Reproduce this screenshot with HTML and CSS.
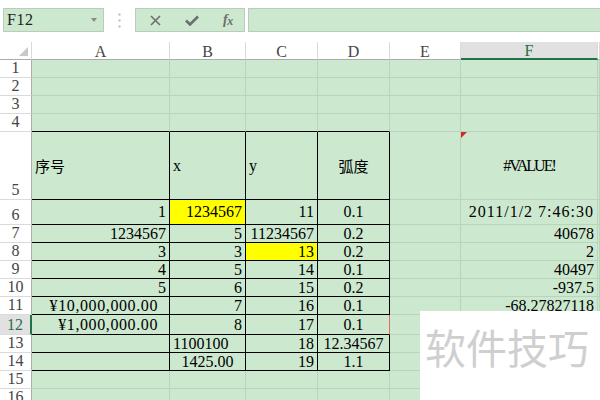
FILE: index.html
```html
<!DOCTYPE html>
<html lang="zh">
<head>
<meta charset="utf-8">
<title>Sheet</title>
<link rel="stylesheet" href="styles.css">
</head>
<body>
<div class="fbar">
  <div class="namebox"><span class="ref">F12</span><span class="dd"></span></div>
  <div class="grip"><svg width="3" height="15" viewBox="0 0 3 15"><circle cx="1.5" cy="1.5" r="1.2" fill="#c4c4c4"/><circle cx="1.5" cy="7.5" r="1.2" fill="#c4c4c4"/><circle cx="1.5" cy="13.5" r="1.2" fill="#c4c4c4"/></svg></div>
  <div class="btns">
    <svg class="ic-x" width="11" height="11" viewBox="0 0 11 11"><path d="M1 1L10 10M10 1L1 10" stroke="#6e6e6e" stroke-width="1.6" fill="none"/></svg>
    <svg class="ic-ok" width="14" height="11" viewBox="0 0 14 11"><path d="M1 5.5L5 9.5L13 1.5" stroke="#6e6e6e" stroke-width="2.6" fill="none"/></svg>
    <span class="fx"><i>f</i><i class="sx">x</i></span>
  </div>
  <div class="formula"></div>
</div>

<div class="sheet">
  <!-- header -->
  <div class="corner"><span class="tri"></span></div>
  <div class="ch">A</div><div class="ch">B</div><div class="ch">C</div><div class="ch">D</div><div class="ch">E</div><div class="ch sel">F</div><div class="ch"></div>

  <!-- 1 -->
  <div class="rh">1</div>
  <div class="c"></div><div class="c"></div><div class="c"></div><div class="c"></div><div class="c"></div><div class="c"></div><div class="c"></div>
  <!-- 2 -->
  <div class="rh">2</div>
  <div class="c"></div><div class="c"></div><div class="c"></div><div class="c"></div><div class="c"></div><div class="c"></div><div class="c"></div>
  <!-- 3 -->
  <div class="rh">3</div>
  <div class="c"></div><div class="c"></div><div class="c"></div><div class="c"></div><div class="c"></div><div class="c"></div><div class="c"></div>
  <!-- 4 -->
  <div class="rh">4</div>
  <div class="c tb"></div><div class="c tb"></div><div class="c tb"></div><div class="c tb"></div><div class="c"></div><div class="c"></div><div class="c"></div>

  <!-- 5 -->
  <div class="rh">5</div>
  <div class="c t l cjk">序号</div><div class="c t l">x</div><div class="c t l">y</div><div class="c t m cjk">弧度</div><div class="c"></div><div class="c m note"><span class="flag"></span><span class="err">#VALUE!</span></div><div class="c"></div>
  <!-- 6 -->
  <div class="rh">6</div>
  <div class="c t r">1</div><div class="c t r yel">1234567</div><div class="c t r">11</div><div class="c t m">0.1</div><div class="c"></div><div class="c r"><span class="dt">2011/1/2 7:46:30</span></div><div class="c"></div>
  <!-- 7 -->
  <div class="rh">7</div>
  <div class="c t r">1234567</div><div class="c t r">5</div><div class="c t r">11234567</div><div class="c t m">0.2</div><div class="c"></div><div class="c r">40678</div><div class="c"></div>
  <!-- 8 -->
  <div class="rh">8</div>
  <div class="c t r">3</div><div class="c t r">3</div><div class="c t r yel">13</div><div class="c t m">0.2</div><div class="c"></div><div class="c r">2</div><div class="c"></div>
  <!-- 9 -->
  <div class="rh">9</div>
  <div class="c t r">4</div><div class="c t r">5</div><div class="c t r">14</div><div class="c t m">0.1</div><div class="c"></div><div class="c r">40497</div><div class="c"></div>
  <!-- 10 -->
  <div class="rh">10</div>
  <div class="c t r">5</div><div class="c t r">6</div><div class="c t r">15</div><div class="c t m">0.2</div><div class="c"></div><div class="c r">-937.5</div><div class="c"></div>
  <!-- 11 -->
  <div class="rh">11</div>
  <div class="c t r acct">¥10,000,000.00</div><div class="c t r">7</div><div class="c t r">16</div><div class="c t m">0.1</div><div class="c"></div><div class="c r">-68.27827118</div><div class="c"></div>
  <!-- 12 -->
  <div class="rh sel">12</div>
  <div class="c t r acct">¥1,000,000.00</div><div class="c t r">8</div><div class="c t r">17</div><div class="c t m red">0.1</div><div class="c"></div><div class="c"></div><div class="c"></div>
  <!-- 13 -->
  <div class="rh">13</div>
  <div class="c t"></div><div class="c t l">1100100</div><div class="c t r">18</div><div class="c t m">12.34567</div><div class="c"></div><div class="c"></div><div class="c"></div>
  <!-- 14 -->
  <div class="rh">14</div>
  <div class="c t"></div><div class="c t m">1425.00</div><div class="c t r">19</div><div class="c t m">1.1</div><div class="c"></div><div class="c"></div><div class="c"></div>
  <!-- 15 -->
  <div class="rh">15</div>
  <div class="c"></div><div class="c"></div><div class="c"></div><div class="c"></div><div class="c"></div><div class="c"></div><div class="c"></div>
  <!-- 16 -->
  <div class="rh">16</div>
  <div class="c"></div><div class="c"></div><div class="c"></div><div class="c"></div><div class="c"></div><div class="c"></div><div class="c"></div>
</div>

<div class="watermark">软件技巧</div>
</body>
</html>
```

FILE: styles.css
```css
* { box-sizing: border-box; }

body {
  margin: 0;
  width: 600px;
  height: 400px;
  overflow: hidden;
  position: relative;
  background: #ffffff;
  font-family: "Liberation Serif", "Noto Sans CJK SC", serif;
  color: #000;
}

/* ---------- formula bar ---------- */
.fbar {
  display: flex;
  height: 42px;
  padding: 8px 0 10px 3px;
}

.namebox {
  width: 101px;
  display: flex;
  align-items: center;
  justify-content: space-between;
  padding: 0 6px 0 3px;
  background: #cce8cf;
  border: 1px solid #bccbbd;
  font-size: 16px;
  letter-spacing: 0.5px;
  color: #222;
}

.dd {
  width: 0;
  height: 0;
  border-left: 3.5px solid transparent;
  border-right: 3.5px solid transparent;
  border-top: 4px solid #8a8a8a;
}

.grip {
  width: 31px;
  display: flex;
  align-items: center;
  justify-content: center;
}

.btns {
  width: 110px;
  display: flex;
  align-items: center;
  gap: 24px;
  padding-left: 14px;
  background: #cce8cf;
  border: 1px solid #bccbbd;
}

.fx {
  font-family: "Liberation Serif", serif;
  font-size: 14px;
  color: #6e6e6e;
  font-weight: bold;
  letter-spacing: -0.5px;
}

.fx .sx {
  font-size: 12px;
  position: relative;
  top: 1px;
}

.formula {
  flex: 1;
  margin-left: 3px;
  background: #cce8cf;
  border: 1px solid #bccbbd;
  border-right: none;
}

/* ---------- sheet ---------- */
.sheet {
  display: grid;
  grid-template-columns: 32px 138px 76px 72px 72px 71px 137px 1fr;
  grid-template-rows: 18px repeat(4, 18px) 68px 25px repeat(5, 18px) 20px repeat(4, 18px);
  font-size: 16px;
}

.corner {
  background: #fff;
  border-right: 1px solid #dadada;
  border-bottom: 1px solid #ababab;
  display: flex;
  justify-content: flex-end;
  align-items: flex-end;
  padding: 0 3px 3px 0;
}

.tri {
  width: 0;
  height: 0;
  border-left: 9px solid transparent;
  border-bottom: 9px solid #c8c8c8;
}

.ch {
  background: #fff;
  border-right: 1px solid #dadada;
  border-bottom: 1px solid #ababab;
  display: flex;
  justify-content: center;
  align-items: center;
  color: #444;
  padding-top: 2px;
}

.ch.sel {
  background: #e1e1e1;
  border-bottom: 2px solid #217346;
  color: #217346;
}

.rh {
  background: #fff;
  border-right: 1px solid #ababab;
  border-bottom: 1px solid #dadada;
  display: flex;
  justify-content: center;
  align-items: flex-end;
  padding: 0 0 1px 0;
  color: #444;
  line-height: 16px;
}

.rh.sel {
  background: #e1e1e1;
  border-right: 2px solid #217346;
  color: #217346;
}

.c {
  background: #cce8cf;
  border-right: 1px solid #b9d3bc;
  border-bottom: 1px solid #b9d3bc;
  display: flex;
  align-items: center;
  white-space: nowrap;
  overflow: hidden;
  line-height: 16px;
}

.t { border-right-color: #000; border-bottom-color: #000; }
.tb { border-bottom-color: #000; }

.r { justify-content: flex-end; padding-right: 3px; }
.l { justify-content: flex-start; padding-left: 3px; }
.m { justify-content: center; }
.acct { padding-right: 11px; letter-spacing: 0.6px; }

.cjk {
  font-family: "Noto Sans CJK SC", sans-serif;
  font-size: 15px;
}

.err { letter-spacing: -2px; }
.dt { letter-spacing: 1px; }

.yel { background: #ffff00; }
.red { border-right-color: #e8695c; }

.note { position: relative; }
.flag {
  position: absolute;
  top: 0;
  left: 0;
  width: 0;
  height: 0;
  border-top: 6px solid #d8261e;
  border-right: 6px solid transparent;
}

/* ---------- watermark overlay ---------- */
.watermark {
  position: absolute;
  left: 420px;
  top: 311px;
  width: 180px;
  height: 89px;
  background: #ffffff;
  padding: 10px 0 0 5px;
  font-family: "Noto Sans CJK SC", sans-serif;
  font-size: 41px;
  line-height: 50px;
  color: #cfcfcf;
  white-space: nowrap;
}
```
